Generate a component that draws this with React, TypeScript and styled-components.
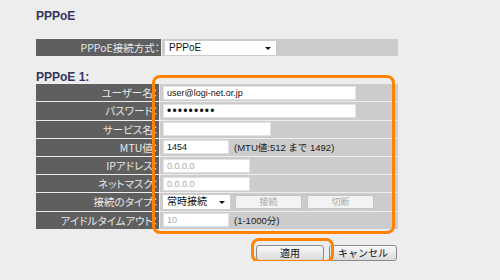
import React from 'react'
import styled, { createGlobalStyle } from 'styled-components'

const GlobalStyle = createGlobalStyle`
  body {
    margin: 0;
    background: #ededed;
    font-family: "Liberation Sans", Arial, "Noto Sans CJK JP", sans-serif;
  }
`

const App = () => {
  return (
    <Page>
      <GlobalStyle />
      <Title>PPPoE</Title>
      <Table>
        <Row>
          <Label $w={125}>PPPoE接続方式：</Label>
          <Value>
            <SelectBox $w={111}>
              PPPoE
              <Arrow />
            </SelectBox>
          </Value>
        </Row>
      </Table>

      <SubTitle>PPPoE 1:</SubTitle>
      <Table>
        <Row>
          <Label>ユーザー名：</Label>
          <Value>
            <Field $w={193} defaultValue="user@logi-net.or.jp" />
          </Value>
        </Row>
        <Row>
          <Label>パスワード：</Label>
          <Value>
            <Field $w={193} type="password" defaultValue="123456789" />
          </Value>
        </Row>
        <Row>
          <Label>サービス名：</Label>
          <Value>
            <Field $w={108} defaultValue="" />
          </Value>
        </Row>
        <Row>
          <Label>MTU値：</Label>
          <Value>
            <Field $w={66} defaultValue="1454" />
            <Note>(MTU値:512 まで 1492)</Note>
          </Value>
        </Row>
        <Row>
          <Label>IPアドレス：</Label>
          <Value>
            <Field $w={87} placeholder="0.0.0.0" disabled />
          </Value>
        </Row>
        <Row>
          <Label>ネットマスク：</Label>
          <Value>
            <Field $w={87} placeholder="0.0.0.0" disabled />
          </Value>
        </Row>
        <Row>
          <Label>接続のタイプ：</Label>
          <Value>
            <SelectBox $w={67}>
              常時接続
              <Arrow />
            </SelectBox>
            <SmallBtn disabled>接続</SmallBtn>
            <SmallBtn disabled>切断</SmallBtn>
          </Value>
        </Row>
        <Row>
          <Label>アイドルタイムアウト：</Label>
          <Value>
            <Field $w={66} defaultValue="10" disabled />
            <Note>(1-1000分)</Note>
          </Value>
        </Row>
        <Highlight $x={116} $y={-9} $w={243} $h={159} />
      </Table>

      <ButtonBar>
        <ActionBtn>適用</ActionBtn>
        <ActionBtn>キャンセル</ActionBtn>
        <Highlight $x={215} $y={-7} $w={83} $h={25} />
      </ButtonBar>
    </Page>
  )
}

const Page = styled.div`
  width: 362px;
  padding: 9px 0 0 36px;
`

const Title = styled.div`
  font-size: 12px;
  font-weight: bold;
  line-height: 14px;
  color: #34345f;
  margin-bottom: 16px;
`

const SubTitle = styled.div`
  font-size: 12px;
  font-weight: bold;
  line-height: 14px;
  color: #34345f;
  margin-top: 14px;
`

const Table = styled.div`
  position: relative;
  display: flex;
  flex-direction: column;
  gap: 1px;
  width: 362px;
`

const Row = styled.div`
  display: flex;
  gap: 1px;
  height: 17.2px;
`

const Label = styled.div<{ $w?: number }>`
  width: ${p => p.$w || 123}px;
  flex: none;
  background: #5f5f5f;
  color: #e8e8e8;
  font-size: 10.5px;
  font-family: "Noto Sans CJK JP", sans-serif;
  font-feature-settings: "palt";
  display: flex;
  align-items: center;
  justify-content: flex-end;
  padding-right: 1px;
  box-sizing: border-box;
  white-space: nowrap;
`

const Value = styled.div`
  flex: 1;
  background: #cccccc;
  display: flex;
  align-items: center;
  gap: 5px;
  padding-left: 3px;
`

const Field = styled.input<{ $w: number }>`
  width: ${p => p.$w}px;
  height: 14px;
  box-sizing: border-box;
  border: 1px solid #e2e2e2;
  background: #fff;
  padding: 0 3px;
  font-size: 9px;
  font-family: "Liberation Sans", Arial, sans-serif;
  color: #111;
  outline: none;
  &[type="password"] {
    letter-spacing: 1.2px;
    font-size: 12px;
  }
  &:disabled {
    color: #aaa;
  }
  &::placeholder {
    color: #aaa;
  }
`

const SelectBox = styled.div<{ $w: number }>`
  position: relative;
  width: ${p => p.$w}px;
  height: 14px;
  box-sizing: border-box;
  background: #fff;
  padding-left: 4px;
  font-size: 10px;
  line-height: 14px;
  color: #111;
  font-family: "Liberation Sans", Arial, "Noto Sans CJK JP", sans-serif;
`

const Arrow = styled.span`
  position: absolute;
  right: 5px;
  top: 6px;
  border-left: 3px solid transparent;
  border-right: 3px solid transparent;
  border-top: 3px solid #111;
`

const Note = styled.span`
  font-size: 9.5px;
  color: #222;
  font-family: "Liberation Sans", Arial, "Noto Sans CJK JP", sans-serif;
  white-space: nowrap;
`

const SmallBtn = styled.button`
  width: 67px;
  height: 14px;
  padding: 0;
  border: 1px solid #c4c4c4;
  border-radius: 2px;
  background: #f3f3f3;
  color: #a8a8a8;
  font-size: 9px;
  font-family: "Noto Sans CJK JP", sans-serif;
  line-height: 12px;
`

const ButtonBar = styled.div`
  position: relative;
  display: flex;
  justify-content: flex-end;
  gap: 5px;
  width: 361px;
  margin-top: 16px;
`

const ActionBtn = styled.button`
  width: 68px;
  height: 16px;
  padding: 0;
  border: 1px solid #8a8a8a;
  border-radius: 3px;
  background: linear-gradient(#fafafa, #dadada);
  color: #111;
  font-size: 10px;
  font-family: "Noto Sans CJK JP", sans-serif;
  line-height: 14px;
`

const Highlight = styled.div<{ $x: number; $y: number; $w: number; $h: number }>`
  position: absolute;
  left: ${p => p.$x}px;
  top: ${p => p.$y}px;
  width: ${p => p.$w}px;
  height: ${p => p.$h}px;
  box-sizing: border-box;
  border: 3px solid #ff8200;
  border-radius: 8px;
  pointer-events: none;
`

export default App
